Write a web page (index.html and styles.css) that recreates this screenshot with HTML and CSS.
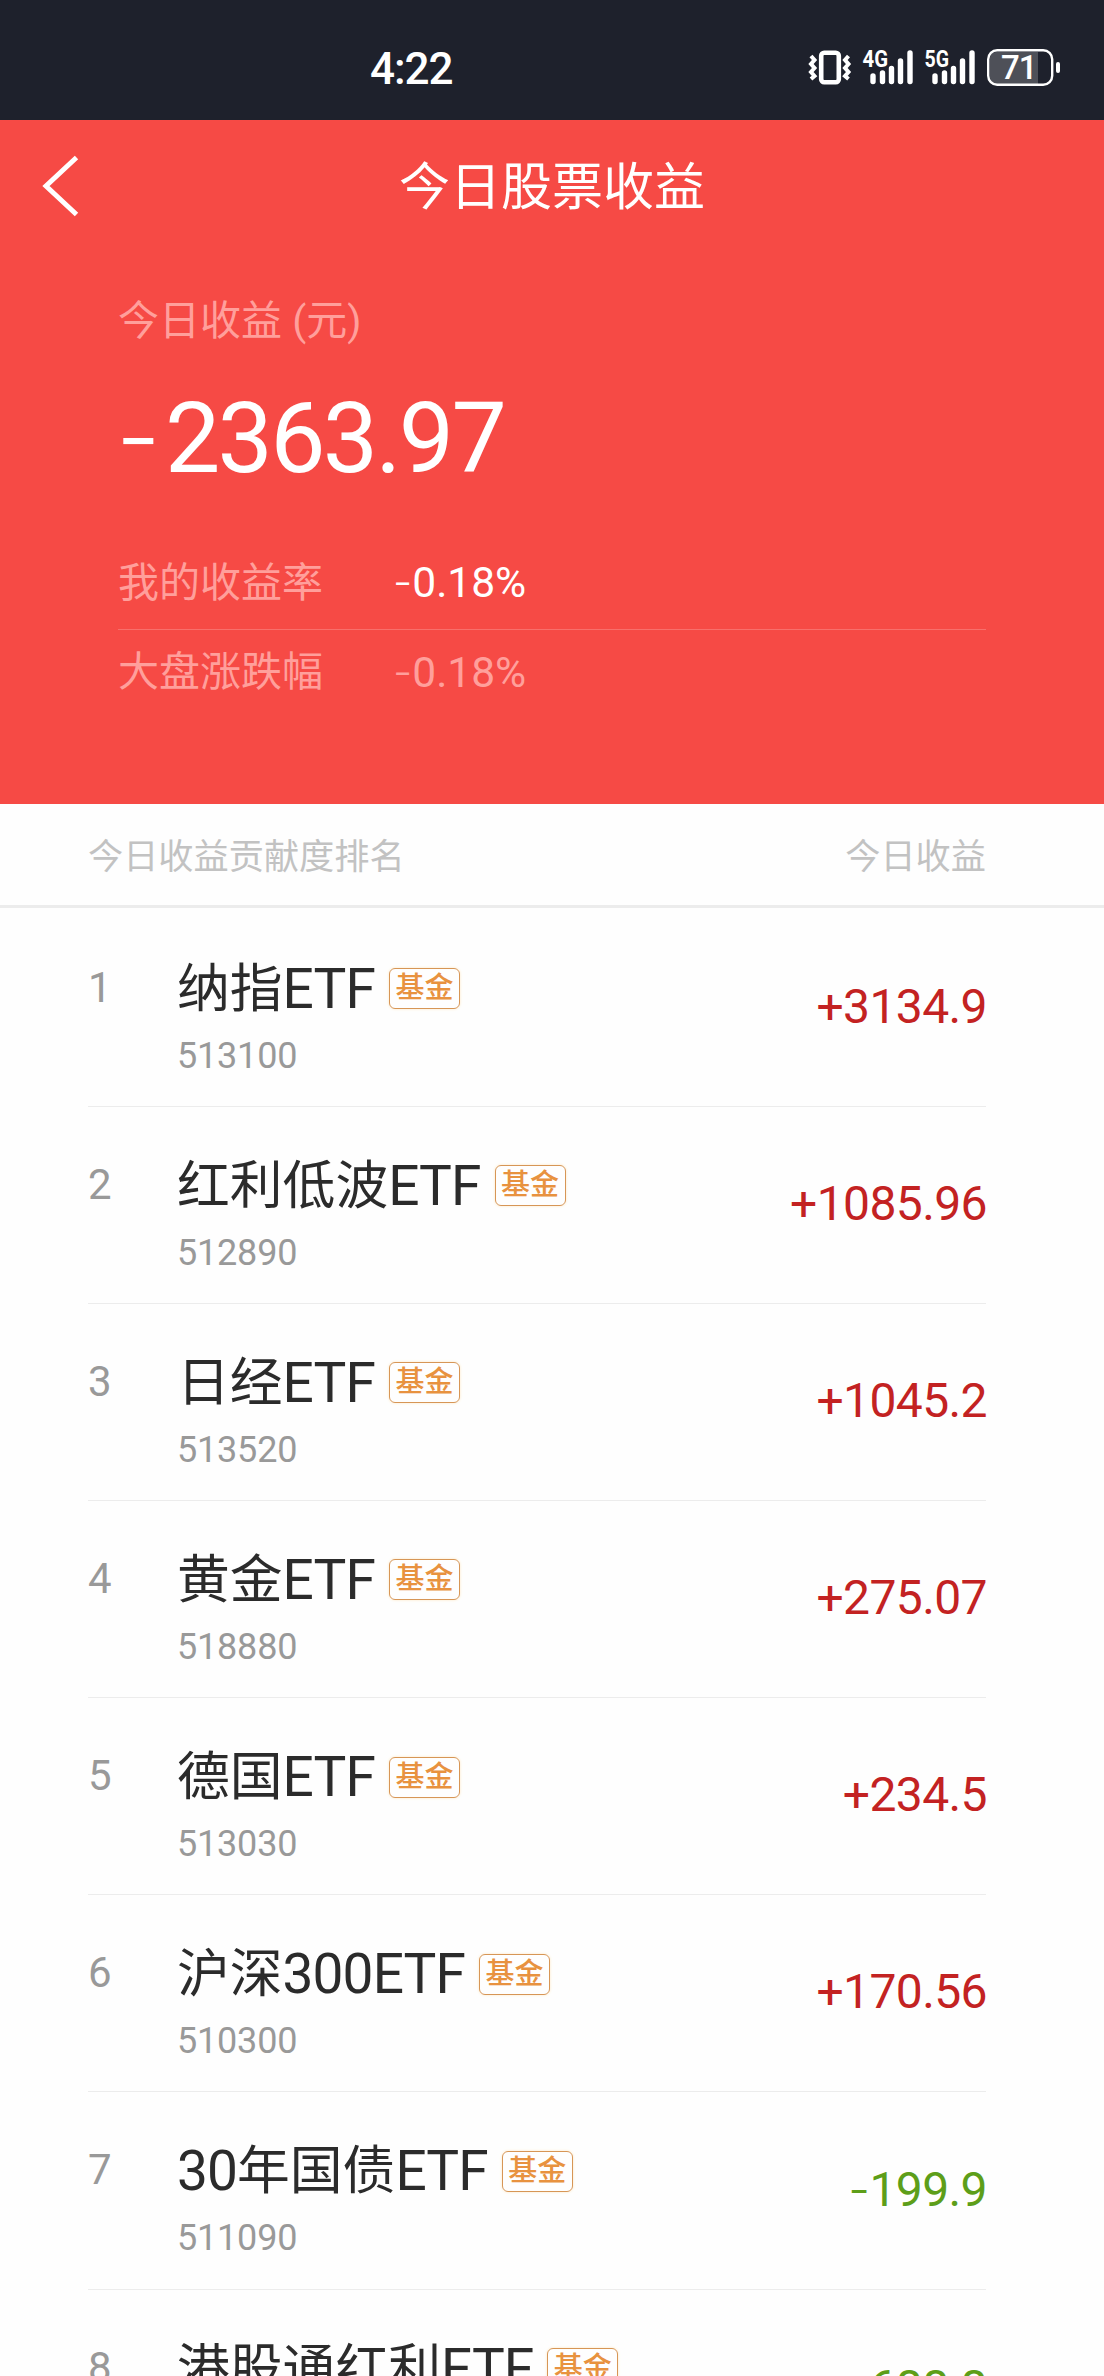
FILE: index.html
```html
<!DOCTYPE html>
<html lang="zh-CN">
<head>
<meta charset="utf-8">
<title>今日股票收益</title>
<link rel="stylesheet" href="styles.css">
</head>
<body>
<header class="status">
  <time class="clock">4:22</time>
  <svg class="status-icons" width="256" height="44" viewBox="808 46 256 44" fill="none" stroke="#fff">
    <rect x="821.2" y="52.7" width="17.6" height="29.6" rx="3" stroke-width="4.6"/>
    <path d="M811 56l3.5 4-3.500 4 3.500 4-3.500 4 3.500 4-3.500 3M848.500 56l-3.500 4 3.500 4-3.500 4 3.500 4-3.500 4 3.500 3" stroke-width="4"/>
    <path d="M873 76v5.500M882.500 73v8.500M891.500 68.500v13M900.500 61v20.500M910 53v28.500" stroke-width="5.400" stroke-linecap="round"/>
    <path d="M935 76v5.500M944.500 73v8.500M953.500 68.500v13M962.500 61v20.500M972 53v28.500" stroke-width="5.400" stroke-linecap="round"/>
    <text class="net" x="862.5" y="67" textLength="25.5" lengthAdjust="spacingAndGlyphs">4G</text>
    <text class="net" x="924.5" y="67" textLength="24.5" lengthAdjust="spacingAndGlyphs">5G</text>
    <path d="M996 52h42v32h-42q-6 0-6-6v-20q0-6 6-6z" fill="#4e5058" stroke="none"/>
    <rect x="988.200" y="50.200" width="64" height="34.600" rx="9" stroke-width="2.400"/>
    <path d="M1058 64v7" stroke-width="4" stroke-linecap="round"/>
    <text class="battery" x="1001" y="79">71</text>
  </svg>
</header>

<section class="hero">
  <nav class="nav">
    <svg class="back" width="40" height="64" viewBox="0 0 40 64" fill="none" stroke="#fff" stroke-width="5"><path d="M36.500 3.500L6 32l30.500 28.500"/></svg>
    <h1 class="title">今日股票收益</h1>
  </nav>
  <div class="summary">
    <div class="label">今日收益 (元)</div>
    <div class="total"><span class="minus">-</span>2363.97</div>
    <div class="rate"><span class="rate-name">我的收益率</span><span class="rate-value"><span class="minus">-</span>0.18%</span></div>
    <div class="rate market"><span class="rate-name">大盘涨跌幅</span><span class="rate-value"><span class="minus">-</span>0.18%</span></div>
  </div>
</section>

<div class="list-head"><span>今日收益贡献度排名</span><span>今日收益</span></div>
<main class="list">
  <div class="row"><span class="rank">1</span><div class="fund"><div class="name">纳指<span class="latin">ETF</span><span class="tag">基金</span></div><div class="code">513100</div></div><span class="amount">+3134.9</span></div>
  <div class="row"><span class="rank">2</span><div class="fund"><div class="name">红利低波<span class="latin">ETF</span><span class="tag">基金</span></div><div class="code">512890</div></div><span class="amount">+1085.96</span></div>
  <div class="row"><span class="rank">3</span><div class="fund"><div class="name">日经<span class="latin">ETF</span><span class="tag">基金</span></div><div class="code">513520</div></div><span class="amount">+1045.2</span></div>
  <div class="row"><span class="rank">4</span><div class="fund"><div class="name">黄金<span class="latin">ETF</span><span class="tag">基金</span></div><div class="code">518880</div></div><span class="amount">+275.07</span></div>
  <div class="row"><span class="rank">5</span><div class="fund"><div class="name">德国<span class="latin">ETF</span><span class="tag">基金</span></div><div class="code">513030</div></div><span class="amount">+234.5</span></div>
  <div class="row"><span class="rank">6</span><div class="fund"><div class="name">沪深<span class="latin">300ETF</span><span class="tag">基金</span></div><div class="code">510300</div></div><span class="amount">+170.56</span></div>
  <div class="row"><span class="rank">7</span><div class="fund"><div class="name"><span class="latin">30</span>年国债<span class="latin">ETF</span><span class="tag">基金</span></div><div class="code">511090</div></div><span class="amount loss"><span class="minus">-</span>199.9</span></div>
  <div class="row"><span class="rank">8</span><div class="fund"><div class="name">港股通红利<span class="latin">ETF</span><span class="tag">基金</span></div><div class="code">513530</div></div><span class="amount loss"><span class="minus">-</span>688.8</span></div>
</main>
</body>
</html>
```
FILE: styles.css
```css
* { box-sizing: border-box; }
body {
  margin: 0;
  width: 1104px;
  height: 2376px;
  overflow: hidden;
  background: #fefefe;
  font-family: Roboto, "Noto Sans CJK SC", sans-serif;
}
.status {
  height: 120px;
  padding: 0 40px 0 370px;
  display: flex;
  align-items: center;
  justify-content: space-between;
  background: #1e212c;
  color: #fff;
}
.status-icons { margin-bottom: -16px; }
.clock { font-size: 44px; line-height: 52px; font-weight: 500; margin-top: 17px; letter-spacing: -1px; }
.net { font-size: 23px; font-weight: 700; fill: #fff; stroke: none; }
.battery { font-size: 33px; font-weight: 500; letter-spacing: -1px; fill: #fff; stroke: none; }

.hero { height: 684px; background: #f64a45; color: #fff; }
.nav {
  height: 132px;
  padding: 0 40px;
  display: grid;
  grid-template-columns: 40px 1fr 40px;
  align-items: center;
}
.title { margin: 4px 0 0; text-align: center; font-size: 51px; line-height: 60px; font-weight: 400; }
.summary { padding: 39px 118px 0; }
.label { font-size: 41px; line-height: 60px; color: #ff9f9b; }
.total { margin-top: 31px; font-size: 98.500px; line-height: 110px; letter-spacing: -2.700px; }
.minus { font-family: Inter, sans-serif; font-weight: 300; }
.total .minus { margin: 0 7px 0 -2px; }
.rate { height: 84px; display: flex; align-items: center; font-size: 41px; line-height: 60px; }
.total + .rate { margin-top: 42px; height: 94px; border-bottom: 1px solid #f86f6b; }
.rate-name { width: 275px; color: #ff9f9b; }
.rate-value { font-size: 42.500px; }
.market, .market .rate-value { color: #ff9f9b; }

.list-head {
  height: 104px;
  padding: 0 118px 3px 88px;
  display: flex;
  justify-content: space-between;
  align-items: center;
  border-bottom: 3px solid #ececec;
  font-size: 35.200px;
  color: #c2c2c2;
}
.list { padding: 1.500px 117px 0 88px; }
.row {
  height: 197.170px;
  margin-right: 1px;
  display: flex;
  align-items: flex-start;
  border-bottom: 1px solid #ececec;
}
.rank { width: 89px; padding-top: 48px; font-size: 42px; line-height: 60px; color: #999; }
.fund { flex: 1; padding-top: 49px; }
.name {
  height: 60px;
  display: flex;
  align-items: center;
  font-size: 52.800px;
  line-height: 60px;
  color: #2b2b2b;
}
.latin { font-size: 55px; letter-spacing: -0.900px; }
.tag {
  width: 71px;
  height: 41px;
  margin-left: 14px;
  border: 1px solid #d79656;
  border-radius: 6px;
  box-shadow: 0 0 3px #ffe9c4;
  text-align: center;
  font-size: 29px;
  line-height: 39px;
  font-weight: 500;
  color: #e8923f;
}
.code { margin-top: 7px; font-size: 36px; line-height: 60px; letter-spacing: -0.200px; color: #999; }
.amount { margin-right: -1px; padding-top: 67px; font-size: 48px; line-height: 60px; letter-spacing: -0.600px; color: #c32222; }
.loss { color: #5d9e19; }
```
